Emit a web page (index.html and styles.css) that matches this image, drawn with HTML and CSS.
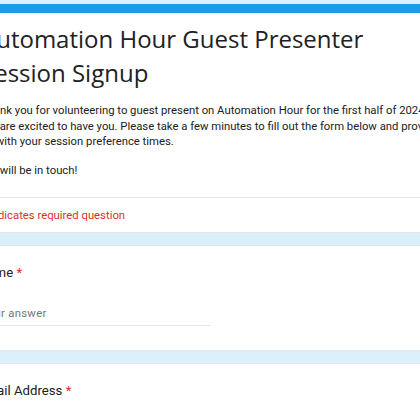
FILE: index.html
```html
<!DOCTYPE html>
<html>
<head>
<meta charset="utf-8">
<link rel="stylesheet" href="styles.css">
</head>
<body>
<div class="form">
  <section class="card header">
    <h1 class="title">Automation Hour Guest Presenter Session Signup</h1>
    <p class="desc">Thank you for volunteering to guest present on Automation Hour for the first half of 2024. We are excited to have you. Please take a few minutes to fill out the form below and provide us with your session preference times.</p>
    <p class="desc">We will be in touch!</p>
  </section>
  <section class="card required">
    <span>* Indicates required question</span>
  </section>
  <section class="card question">
    <div class="label">Name <span class="star">*</span></div>
    <div class="answer">Your answer</div>
  </section>
  <section class="card question">
    <div class="label">Email Address <span class="star">*</span></div>
  </section>
</div>
</body>
</html>
```
FILE: styles.css
```css
html, body {
  margin: 0;
  padding: 0;
  background: #dbf0fb;
  overflow: hidden;
}
.form {
  margin-left: -19px;
  width: 470px;
  padding-top: 4px;
  display: flex;
  flex-direction: column;
}
.card {
  background: #fff;
  border-top: 1px solid #e3e6e8;
  border-bottom: 1px solid #e3e6e8;
}
.header {
  border-top: 9px solid #1a9de6;
  padding-top: 9px;
  padding-bottom: 19px;
}
.title {
  margin: 0;
  font-family: "Open Sans", sans-serif;
  font-weight: 400;
  font-size: 24px;
  line-height: 34px;
  color: #202124;
  width: 400px;
}
.desc {
  margin: 13px 0 0;
  font-family: Roboto, sans-serif;
  font-size: 11.3px;
  line-height: 15.5px;
  color: #202124;
  width: 460px;
}
.desc + .desc {
  margin-top: 13px;
}
.required {
  border-top: none;
  height: 34px;
  display: flex;
  align-items: center;
  font-family: Roboto, sans-serif;
  font-size: 11.3px;
  color: #d93025;
}
.question {
  margin-top: 12px;
  padding-top: 19px;
  padding-bottom: 24px;
}
.label {
  margin-left: -3px;
  font-family: Roboto, sans-serif;
  font-size: 13.2px;
  color: #202124;
}
.star {
  color: #d93025;
}
.answer {
  margin-top: 27px;
  width: 230px;
  font-family: Roboto, sans-serif;
  font-size: 11.3px;
  color: #70757a;
  padding-bottom: 5px;
  border-bottom: 1px solid #e6e6e6;
  letter-spacing: 0.3px;
}
```
